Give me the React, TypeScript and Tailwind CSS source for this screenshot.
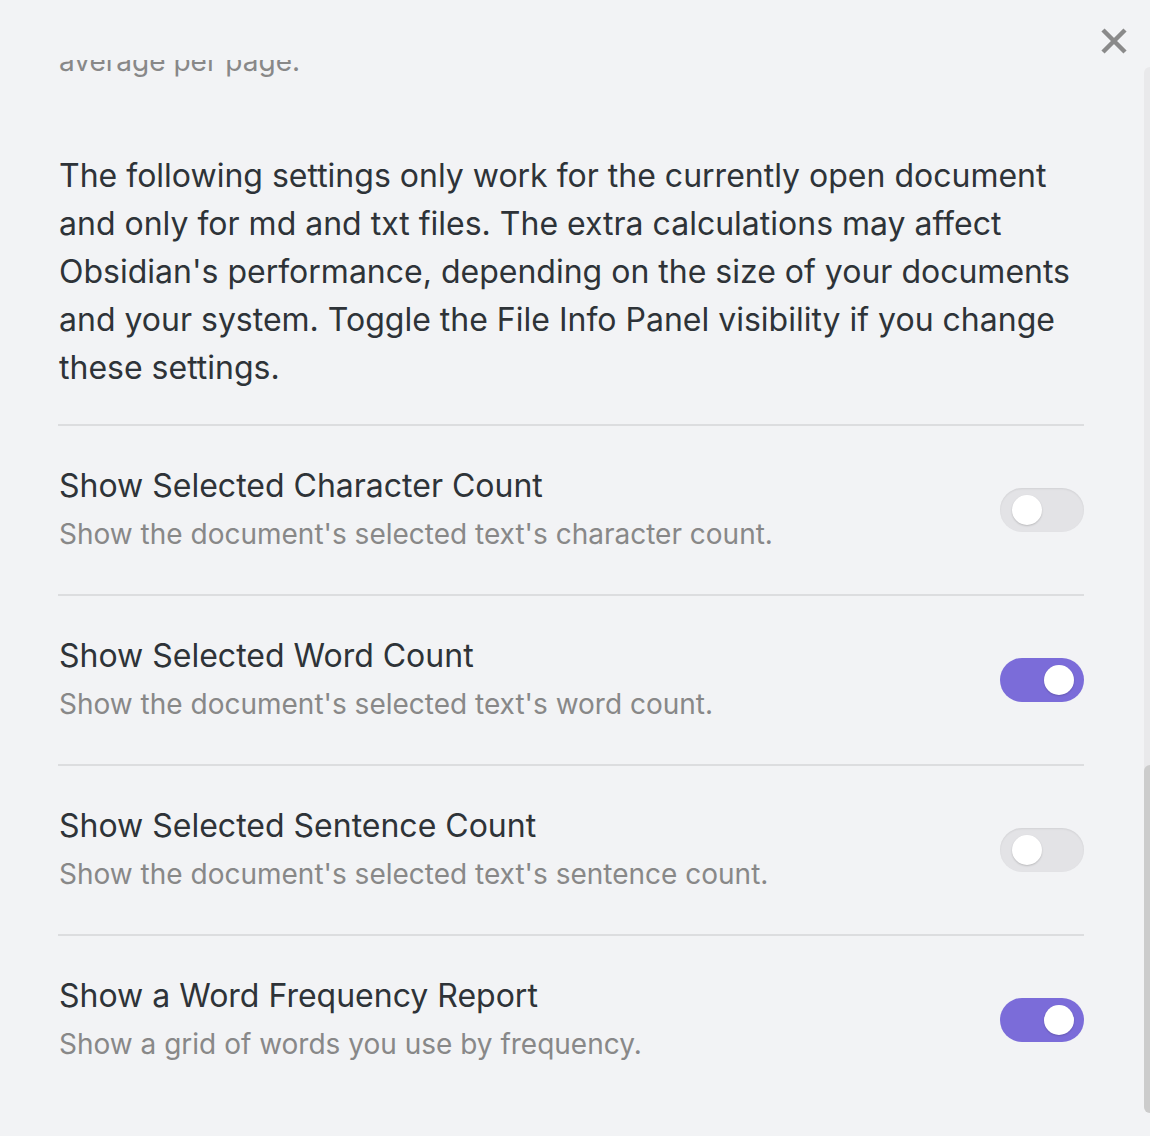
import React, { useState } from 'react';

type Item = { name: string; desc: string; on: boolean };

const items: Item[] = [
  { name: 'Show Selected Character Count', desc: "Show the document's selected text's character count.", on: false },
  { name: 'Show Selected Word Count', desc: "Show the document's selected text's word count.", on: true },
  { name: 'Show Selected Sentence Count', desc: "Show the document's selected text's sentence count.", on: false },
  { name: 'Show a Word Frequency Report', desc: 'Show a grid of words you use by frequency.', on: true },
];

const Toggle: React.FC<{ on: boolean; onClick: () => void }> = ({ on, onClick }) => (
  <button
    onClick={onClick}
    className={
      on
        ? 'flex items-center justify-end px-[10px] w-[84px] h-[44px] rounded-full bg-[#7b6cd9] shrink-0'
        : 'flex items-center justify-start px-[12px] w-[84px] h-[44px] rounded-full bg-[#e3e3e6] shadow-[inset_0_1px_2px_rgba(0,0,0,0.08)] shrink-0'
    }
  >
    <span className="w-[30px] h-[30px] rounded-full bg-white shadow-[0_1px_2px_rgba(0,0,0,0.18)]" />
  </button>
);

export default function App() {
  const [state, setState] = useState(items.map((i) => i.on));

  return (
    <div className="relative w-[1150px] h-[1136px] bg-[#f2f3f5] overflow-hidden font-['Inter',sans-serif] leading-[48px]">
      {/* close */}
      <button className="absolute top-[27px] left-[1100px] w-[28px] h-[28px] text-[#8a8a8a]">
        <svg viewBox="0 0 28 28" width="28" height="28">
          <path d="M3 3 L25 25 M25 3 L3 25" stroke="currentColor" strokeWidth="4.5" strokeLinecap="butt" />
        </svg>
      </button>

      {/* scrollbar */}
      <div className="absolute left-[1144px] top-[67px] w-[6px] h-[1046px] rounded-tl-[6px] rounded-bl-[6px] bg-[#e9e9eb]" />
      <div className="absolute left-[1144px] top-[765px] w-[6px] h-[348px] rounded-tl-[6px] rounded-bl-[6px] bg-[#cccccc]" />

      <div className="pt-[60px]">
        <div className="overflow-hidden h-[1076px]">
          <div className="ml-[58px] w-[1026px] flex flex-col">
            <div className="mt-[-23px] pl-px text-[28px] text-[#888888]">average per page.</div>

            <p className="mt-[67px] pl-px text-[32px] text-[#2e3338]">
              The following settings only work for the currently open document
              <br />
              and only for md and txt files. The extra calculations may affect
              <br />
              Obsidian's performance, depending on the size of your documents
              <br />
              and your system. Toggle the File Info Panel visibility if you change
              <br />
              these settings.
            </p>

            <div className="mt-[32px] flex flex-col">
              {items.map((it, i) => (
                <div
                  key={it.name}
                  className="flex items-center justify-between gap-6 border-t-2 border-[#dcdddf] pt-[36px] pb-[36px]"
                >
                  <div className="pl-px flex flex-col">
                    <div className="text-[32px] text-[#2e3338]">{it.name}</div>
                    <div className="text-[28px] text-[#888888]">{it.desc}</div>
                  </div>
                  <Toggle
                    on={state[i]}
                    onClick={() => setState((s) => s.map((v, j) => (j === i ? !v : v)))}
                  />
                </div>
              ))}
            </div>
          </div>
        </div>
      </div>
    </div>
  );
}
